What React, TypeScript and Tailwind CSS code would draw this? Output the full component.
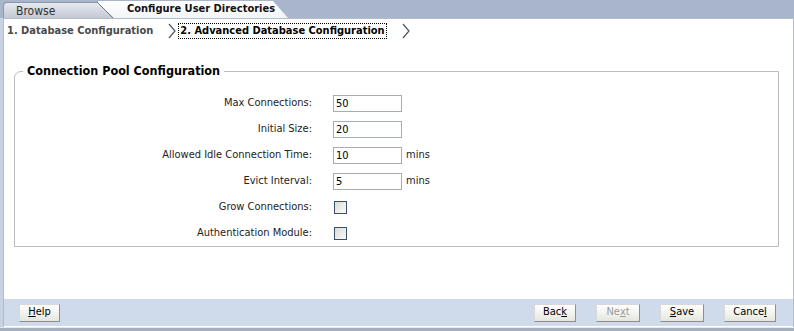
import React from "react";

const font = "font-['DejaVu_Sans_Condensed','DejaVu_Sans',sans-serif]";

function Chevron() {
  return (
    <svg width="10" height="16" viewBox="0 0 10 16" className="shrink-0">
      <path d="M2 1 L8 8 L2 15" fill="none" stroke="#4b5566" strokeWidth="1.2" />
    </svg>
  );
}

function Field({ label, value, unit }: { label: string; value: string; unit?: boolean }) {
  return (
    <>
      <div className="h-[26px] flex items-center justify-end text-[11px] text-[#222]">{label}</div>
      <div className="h-[26px] flex items-center gap-[4px]">
        <input
          defaultValue={value}
          className="w-[69px] h-[17px] border border-[#a5acb5] bg-white px-[2px] text-[11px] text-black outline-none"
        />
        {unit && <span className="text-[11px] text-[#222]">mins</span>}
      </div>
    </>
  );
}

function Check({ label }: { label: string }) {
  return (
    <>
      <div className="h-[26px] flex items-center justify-end text-[11px] text-[#222]">{label}</div>
      <div className="h-[26px] flex items-center pl-[1px]">
        <span className="w-[13px] h-[13px] border border-[#3c4f68] bg-gradient-to-br from-[#dcdcd6] to-[#fbfbf9]" />
      </div>
    </>
  );
}

function Btn({ children, disabled, w }: { children: React.ReactNode; disabled?: boolean; w: string }) {
  return (
    <button
      className={`${w} h-[18px] flex items-center justify-center text-[11px] border border-t-[#d8d8d8] border-l-[#d8d8d8] border-r-[#8e8e8e] border-b-[#8e8e8e] bg-gradient-to-b from-white to-[#e6e6e0] ${
        disabled ? "text-[#9a9a9a]" : "text-black"
      }`}
    >
      {children}
    </button>
  );
}

export default function App() {
  return (
    <div className={`w-[794px] h-[331px] bg-[#a9b5cb] flex flex-col overflow-hidden ${font}`}>
      {/* tabs */}
      <div className="h-[18px] flex items-end pl-[3px] relative">
        <div className="relative z-10 w-[111px] h-[16px] rounded-tl-[4px] bg-gradient-to-b from-[#e6e9ee] to-[#c3c9d4] border-l border-t border-[#8d97a8] [clip-path:polygon(0_0,94px_0,111px_100%,0_100%)] flex items-center pl-[12px] text-[12px] text-[#333]">
          Browse
        </div>
        <svg width="18" height="17" className="absolute left-[96px] top-[1px] z-20">
          <path d="M1 1 L17 17" stroke="#6c7688" strokeWidth="1" />
        </svg>
        <div className="ml-[-16px] w-[190px] h-[17px] bg-gradient-to-b from-white to-[#f3f4f6] [clip-path:polygon(0_0,175px_0,190px_100%,0_100%)] flex items-center pl-[29px] text-[11px] font-bold text-[#111] whitespace-nowrap">
          Configure User Directories
        </div>
      </div>

      <div className="flex-1 flex">
        <div className="w-[3px] bg-[#c7d2e3]" />
        <div className="flex-1 bg-white border-l border-t border-r border-[#b4bcc8] flex flex-col">
          {/* steps */}
          <div className="h-[24px] flex items-center pl-[3px] text-[11px] font-bold whitespace-nowrap">
            <span className="text-[#4a4a4a]">1. Database Configuration</span>
            <span className="ml-[14px]"><Chevron /></span>
            <span className="ml-[1px] border border-dotted border-black px-[1px] leading-[14px] text-black">
              2. Advanced Database Configuration
            </span>
            <span className="ml-[14px]"><Chevron /></span>
          </div>

          {/* fieldset */}
          <fieldset className="ml-[10px] mt-[20px] w-[765px] border border-[#bcbcbc] rounded-tl-[7px] pb-0">
            <legend className="ml-[8px] px-[4px] text-[12.5px] font-bold text-black leading-[16px]">
              Connection Pool Configuration
            </legend>
            <div className="grid grid-cols-[297px_auto] gap-x-[21px] pt-[11px]">
              <Field label="Max Connections:" value="50" />
              <Field label="Initial Size:" value="20" />
              <Field label="Allowed Idle Connection Time:" value="10" unit />
              <Field label="Evict Interval:" value="5" unit />
              <Check label="Grow Connections:" />
              <Check label="Authentication Module:" />
            </div>
          </fieldset>

          <div className="flex-1" />

          {/* footer */}
          <div className="h-[27px] mb-[1px] bg-[#cfdbea] flex items-center pl-[15px] pr-[17px]">
            <Btn w="w-[41px]"><span className="underline">H</span>elp</Btn>
            <div className="flex-1" />
            <div className="flex gap-[20px]">
              <Btn w="w-[42px]">Bac<span className="underline">k</span></Btn>
              <Btn w="w-[44px]" disabled>Ne<span className="underline">x</span>t</Btn>
              <Btn w="w-[44px]"><span className="underline">S</span>ave</Btn>
              <Btn w="w-[52px]">Cance<span className="underline">l</span></Btn>
            </div>
          </div>
        </div>
      </div>
      <div className="h-[4px] bg-[#a6afbf] border-t border-[#e4e9f0]" />
    </div>
  );
}
